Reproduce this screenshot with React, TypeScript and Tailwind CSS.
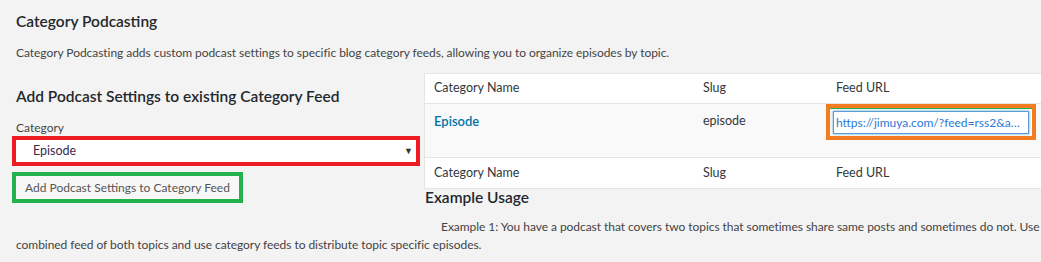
export default function App() {
    return (
        <div className="min-h-[262px] w-[1041px] overflow-hidden bg-[#f3f3f3] text-[#444] font-['Lato',sans-serif]">
            <div className="pl-4 pt-[10px]">
                {/* Header */}
                <h2 className="text-[15.5px] leading-[22px] font-semibold text-[#23282d]">Category Podcasting</h2>
                <p className="mt-[12px] text-[12px] leading-[18px] tracking-[-0.05px] whitespace-nowrap">
                    Category Podcasting adds custom podcast settings to specific blog category feeds, allowing you to organize episodes by topic.
                </p>

                <div className="mt-[11px] flex">
                    {/* Left: form */}
                    <div className="w-[408px] shrink-0">
                        <h3 className="mt-[12px] text-[15.5px] leading-[22px] font-semibold text-[#23282d]">
                            Add Podcast Settings to existing Category Feed
                        </h3>
                        <label className="mt-[13px] block text-[12px] leading-[16px] text-[#444]">Category</label>
                        <div className="-ml-1 w-[408px] border-4 border-[#ed1c24] bg-white">
                            <div className="flex h-[22px] items-center justify-between pl-[17px] pr-[3px]">
                                <span className="text-[12.5px] text-[#3a2a4a]">Episode</span>
                                <span className="text-[9px] text-[#333]">▼</span>
                            </div>
                        </div>
                        <div className="-ml-1 mt-[6px] w-fit border-4 border-[#22b14c]">
                            <button className="block h-[23px] bg-[#f7f7f7] px-[9px] text-[12px] leading-[23px] text-[#555]">
                                Add Podcast Settings to Category Feed
                            </button>
                        </div>
                    </div>

                    {/* Right: table */}
                    <div className="flex-1">
                        <div className="w-[640px] border border-r-0 border-[#e5e5e5] bg-white text-[12.5px] text-[#32373c]">
                            <div className="flex h-[30px] items-center border-b border-[#e5e5e5]">
                                <div className="w-[269px] pl-[9px]">Category Name</div>
                                <div className="w-[134px] pl-[9px]">Slug</div>
                                <div className="flex-1 pl-[8px]">Feed URL</div>
                            </div>
                            <div className="flex h-[54px] border-b border-[#e5e5e5] bg-[#f9f9f9]">
                                <div className="w-[269px] pl-[9px] pt-[8px] text-[13px] font-semibold text-[#0073aa]">Episode</div>
                                <div className="w-[134px] pl-[9px] pt-[8px]">episode</div>
                                <div className="flex-1">
                                    <div className="-ml-[2px] w-[210px] border-4 border-[#f47c20]">
                                        <div className="border-t border-[#22b14c] px-[3px] pb-[2px] pt-[2px]">
                                            <div className="h-[23px] w-full truncate border border-[#5b9dd9] bg-white px-[2px] text-[12px] leading-[21px] text-[#2a7ad9] shadow-[0_0_2px_rgba(30,140,190,0.8)]">
                                                https://jimuya.com/?feed=rss2&amp;amp;cat=5
                                            </div>
                                        </div>
                                    </div>
                                </div>
                            </div>
                            <div className="flex h-[30px] items-center">
                                <div className="w-[269px] pl-[9px]">Category Name</div>
                                <div className="w-[134px] pl-[9px]">Slug</div>
                                <div className="flex-1 pl-[8px]">Feed URL</div>
                            </div>
                        </div>
                        <h3 className="-mt-[1px] pl-[1px] text-[15.5px] leading-[18px] font-semibold text-[#23282d]">Example Usage</h3>
                        <p className="mt-[12px] overflow-hidden whitespace-nowrap pl-[17px] text-[12px] leading-[18px] tracking-[-0.05px]">
                            Example 1: You have a podcast that covers two topics that sometimes share same posts and sometimes do not. Use your main feed as a
                        </p>
                    </div>
                </div>
                <p className="text-[12px] leading-[18px] tracking-[-0.05px] whitespace-nowrap">
                    combined feed of both topics and use category feeds to distribute topic specific episodes.
                </p>
            </div>
        </div>
    );
}
